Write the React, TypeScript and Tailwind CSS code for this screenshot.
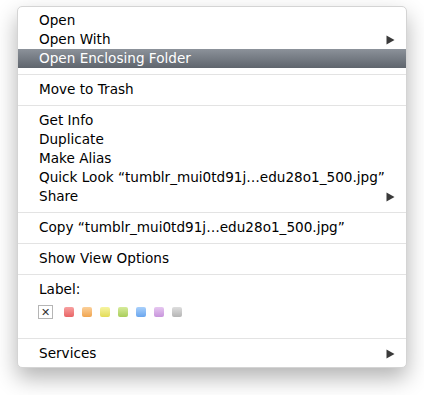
import { ReactNode } from 'react';

const SWATCHES = [
  'from-[#f7a0a0] to-[#e86466]',
  'from-[#fbd099] to-[#f0a54e]',
  'from-[#f6f4a0] to-[#e3dc55]',
  'from-[#d6eb9a] to-[#a9cd5a]',
  'from-[#a9d0fb] to-[#6aa6ee]',
  'from-[#e6c7f0] to-[#c895dc]',
  'from-[#dedede] to-[#b5b5b5]',
];

function Arrow() {
  return (
    <svg width="9" height="10" viewBox="0 0 9 10" className="shrink-0">
      <path d="M0.5 0.5 L8.5 5 L0.5 9.5 Z" fill="#3a3a3a" />
    </svg>
  );
}

function Item({ children, sub, active }: { children: ReactNode; sub?: boolean; active?: boolean }) {
  return (
    <div
      className={`flex h-[19px] items-center justify-between pl-[21px] pr-[11px] ${
        active ? 'bg-gradient-to-b from-[#8c929a] to-[#5f656d] text-white' : 'text-black'
      }`}
    >
      <span className="leading-none whitespace-nowrap">{children}</span>
      {sub && <Arrow />}
    </div>
  );
}

function Separator() {
  return (
    <div className="pt-[6px] pb-[5px]">
      <div className="h-px bg-[#e3e3e3]" />
    </div>
  );
}

export default function App() {
  return (
    <div className="min-h-[395px] w-[424px] bg-white pl-[17px] pt-[6px]">
      <div
        className="w-[390px] rounded-[5px] border border-[#d4d4d4] bg-white pt-[4px] pb-[4px] text-[13.6px] shadow-[0_10px_22px_rgba(0,0,0,0.3)]"
        style={{ fontFamily: '"DejaVu Sans", "Liberation Sans", sans-serif' }}
      >
        <Item>Open</Item>
        <Item sub>Open With</Item>
        <Item active>Open Enclosing Folder</Item>
        <Separator />
        <Item>Move to Trash</Item>
        <Separator />
        <Item>Get Info</Item>
        <Item>Duplicate</Item>
        <Item>Make Alias</Item>
        <Item>Quick Look “tumblr_mui0td91j…edu28o1_500.jpg”</Item>
        <Item sub>Share</Item>
        <Separator />
        <Item>Copy “tumblr_mui0td91j…edu28o1_500.jpg”</Item>
        <Separator />
        <Item>Show View Options</Item>
        <Separator />
        <Item>Label:</Item>
        <div className="flex items-center pl-[20px] pt-[6px] pb-[13px]">
          <div className="flex h-[14px] w-[15px] items-center justify-center border border-[#b5b5b5] bg-white text-[11px] leading-none text-[#333]">
            ✕
          </div>
          <div className="ml-[11px] flex gap-[8px]">
            {SWATCHES.map((c) => (
              <div key={c} className={`h-[10px] w-[10px] rounded-[2px] bg-gradient-to-b ${c}`} />
            ))}
          </div>
        </div>
        <Separator />
        <Item sub>Services</Item>
      </div>
    </div>
  );
}
